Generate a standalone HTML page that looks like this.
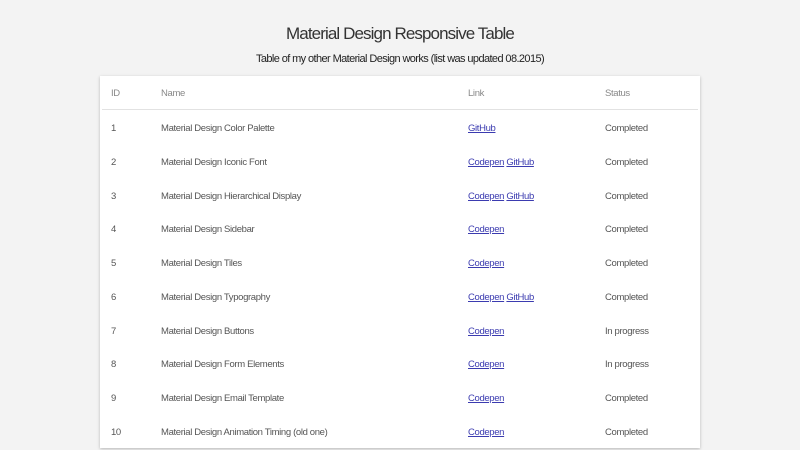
<!DOCTYPE html>
<html><head><style>
body{margin:0;background:#f3f3f3;font-family:"Liberation Sans",sans-serif;width:800px;height:450px;overflow:hidden;position:relative}
h1{position:absolute;top:22px;left:0;width:800px;text-align:center;margin:0;font-weight:normal;font-size:17px;letter-spacing:-0.9px;color:#333;line-height:24px}
h2{position:absolute;top:52px;left:0;width:800px;text-align:center;margin:0;font-weight:normal;font-size:11px;letter-spacing:-0.6px;color:#222;line-height:14px}
.card{position:absolute;left:100px;top:76px;width:600px;height:372px;background:#fff;box-shadow:0 1px 3px rgba(0,0,0,.25)}
.hd{position:absolute;left:2px;right:2px;top:0;height:33px;border-bottom:1px solid #e2e2e2}
.c{position:absolute;font-size:9.5px;letter-spacing:-0.35px;color:#555;line-height:12px;white-space:nowrap}
.hd .c{color:#888;top:12px}
a{color:#3b3bb0;text-decoration:underline}
.r{position:absolute;left:0}
</style></head><body>
<h1>Material Design Responsive Table</h1>
<h2>Table of my other Material Design works (list was updated 08.2015)</h2>
<div class="card">
<div class="hd"><span class="c" style="left:9px">ID</span><span class="c" style="left:59px">Name</span><span class="c" style="left:366px">Link</span><span class="c" style="left:503px">Status</span></div>
</div>
<div class="card" style="background:none;box-shadow:none">
<div class="r" style="top:47px"><span class="c" style="left:11px">1</span><span class="c" style="left:61px">Material Design Color Palette</span><span class="c" style="left:368px"><a>GitHub</a></span><span class="c" style="left:505px">Completed</span></div>
<div class="r" style="top:81px"><span class="c" style="left:11px">2</span><span class="c" style="left:61px">Material Design Iconic Font</span><span class="c" style="left:368px"><a>Codepen</a> <a>GitHub</a></span><span class="c" style="left:505px">Completed</span></div>
<div class="r" style="top:115px"><span class="c" style="left:11px">3</span><span class="c" style="left:61px">Material Design Hierarchical Display</span><span class="c" style="left:368px"><a>Codepen</a> <a>GitHub</a></span><span class="c" style="left:505px">Completed</span></div>
<div class="r" style="top:148px"><span class="c" style="left:11px">4</span><span class="c" style="left:61px">Material Design Sidebar</span><span class="c" style="left:368px"><a>Codepen</a></span><span class="c" style="left:505px">Completed</span></div>
<div class="r" style="top:182px"><span class="c" style="left:11px">5</span><span class="c" style="left:61px">Material Design Tiles</span><span class="c" style="left:368px"><a>Codepen</a></span><span class="c" style="left:505px">Completed</span></div>
<div class="r" style="top:216px"><span class="c" style="left:11px">6</span><span class="c" style="left:61px">Material Design Typography</span><span class="c" style="left:368px"><a>Codepen</a> <a>GitHub</a></span><span class="c" style="left:505px">Completed</span></div>
<div class="r" style="top:250px"><span class="c" style="left:11px">7</span><span class="c" style="left:61px">Material Design Buttons</span><span class="c" style="left:368px"><a>Codepen</a></span><span class="c" style="left:505px">In progress</span></div>
<div class="r" style="top:283px"><span class="c" style="left:11px">8</span><span class="c" style="left:61px">Material Design Form Elements</span><span class="c" style="left:368px"><a>Codepen</a></span><span class="c" style="left:505px">In progress</span></div>
<div class="r" style="top:317px"><span class="c" style="left:11px">9</span><span class="c" style="left:61px">Material Design Email Template</span><span class="c" style="left:368px"><a>Codepen</a></span><span class="c" style="left:505px">Completed</span></div>
<div class="r" style="top:351px"><span class="c" style="left:11px">10</span><span class="c" style="left:61px">Material Design Animation Timing (old one)</span><span class="c" style="left:368px"><a>Codepen</a></span><span class="c" style="left:505px">Completed</span></div>
</div>
</body></html>
